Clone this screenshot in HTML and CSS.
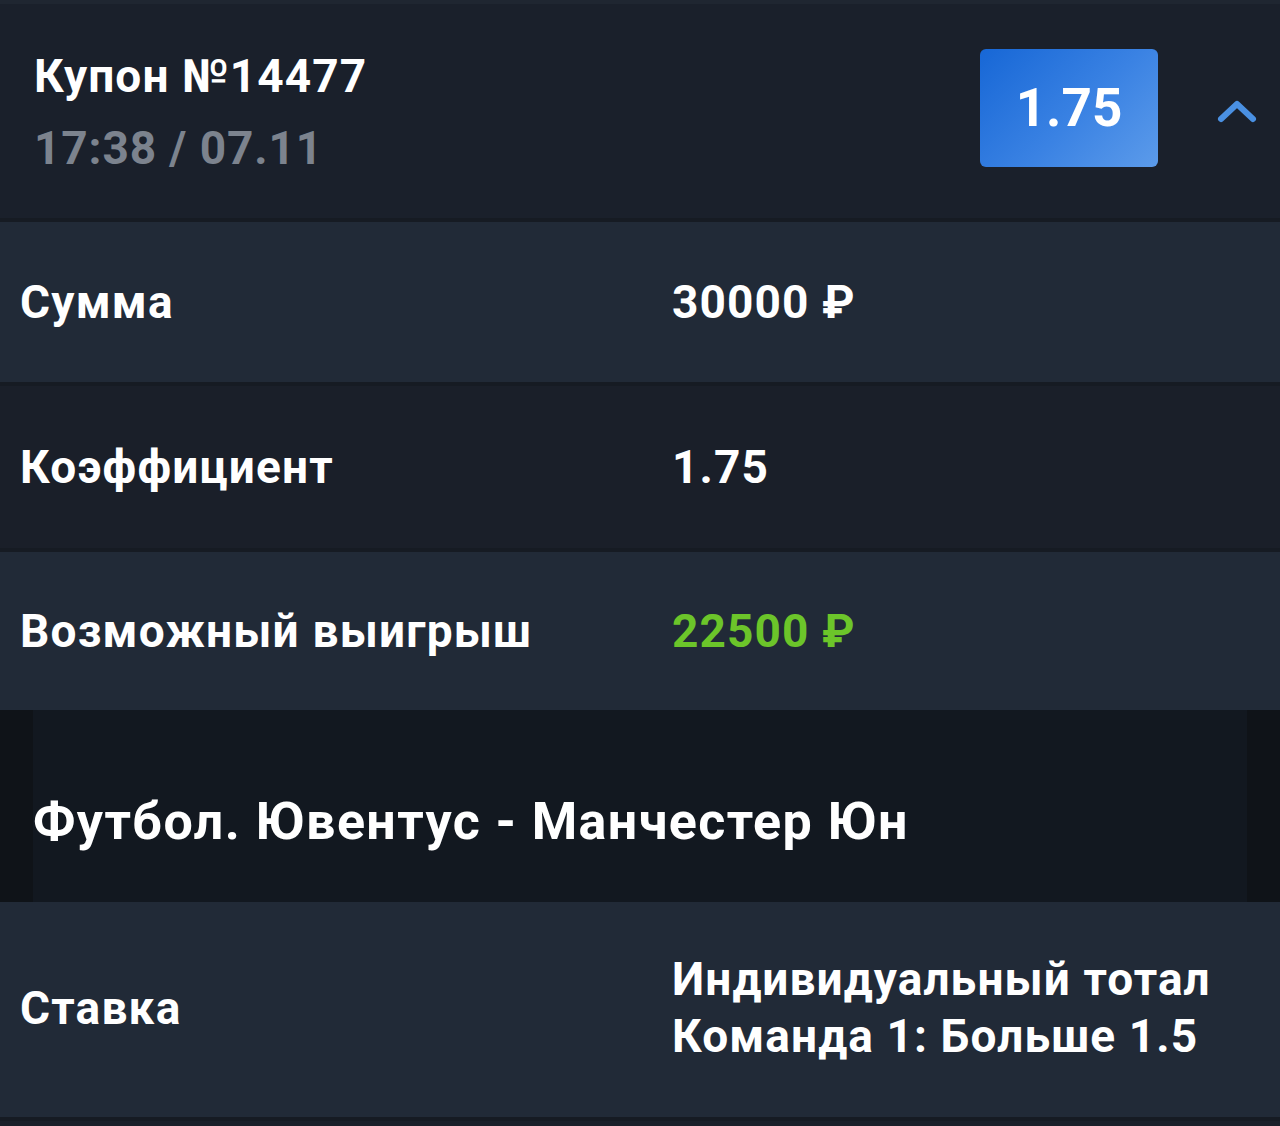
FILE: index.html
```html
<!DOCTYPE html>
<html lang="ru">
<head>
    <meta charset="UTF-8">
    <meta name="viewport" content="width=device-width, initial-scale=1.0">
    <title>Купон №14477</title>
    <link rel="stylesheet" href="styles.css">
</head>
<body>
    <div class="coupon">
        <div class="coupon-head">
            <div class="head-info">
                <div class="coupon-title">Купон №14477</div>
                <div class="coupon-date">17:38 / 07.11</div>
            </div>
            <div class="odds-badge">1.75</div>
            <div class="toggle">
                <svg width="40" height="26" viewBox="0 0 40 26">
                    <path d="M4 21 L20 6 L36 21" fill="none" stroke="#4a90e2" stroke-width="6" stroke-linecap="round" stroke-linejoin="round"/>
                </svg>
            </div>
        </div>

        <div class="row light">
            <div class="label">Сумма</div>
            <div class="value">30000 ₽</div>
        </div>
        <div class="row dark">
            <div class="label">Коэффициент</div>
            <div class="value">1.75</div>
        </div>
        <div class="row light last">
            <div class="label">Возможный выигрыш</div>
            <div class="value win">22500 ₽</div>
        </div>

        <div class="event">
            <div class="event-title">Футбол. Ювентус - Манчестер Юн</div>
        </div>

        <div class="row light bet">
            <div class="label">Ставка</div>
            <div class="value">Индивидуальный тотал<br>Команда 1: Больше 1.5</div>
        </div>
    </div>
</body>
</html>
```

FILE: styles.css
```css
body {
    margin: 0;
    background-color: #1a1f29;
    font-family: Roboto, "Noto Sans", sans-serif;
    font-weight: 700;
    letter-spacing: 1.1px;
    color: #ffffff;
}

.coupon {
    border-top: 4px solid #1f2631;
}

.coupon-head {
    display: flex;
    align-items: center;
    height: 214px;
    padding-left: 34px;
    background-color: #1a202b;
}

.head-info {
    flex: 1;
    padding-top: 2px;
}

.coupon-title {
    font-size: 46px;
    line-height: 72px;
}

.coupon-date {
    font-size: 46px;
    line-height: 72px;
    letter-spacing: 0.9px;
    color: #7c838e;
}

.odds-badge {
    width: 178px;
    height: 118px;
    margin-top: -6px;
    border-radius: 6px;
    background: linear-gradient(135deg, #1767d6 0%, #3a82e3 55%, #5c9bea 100%);
    display: flex;
    align-items: center;
    justify-content: center;
    font-size: 53px;
    letter-spacing: 0;
}

.toggle {
    width: 122px;
    display: flex;
    justify-content: flex-end;
    padding-right: 23px;
    box-sizing: border-box;
}

.row {
    display: flex;
    align-items: center;
    border-top: 4px solid #161b23;
    padding-left: 20px;
    height: 160px;
}

.light {
    background-color: #212a37;
}

.dark {
    background-color: #1a1f29;
    height: 162px;
}

.last {
    height: 158px;
}

.label {
    width: 652px;
    font-size: 46px;
    letter-spacing: 1.2px;
}

.value {
    font-size: 46px;
    line-height: 57px;
}

.win {
    color: #6cc52a;
}

.event {
    height: 192px;
    background-color: #121820;
    border-left: 33px solid #0f1318;
    border-right: 33px solid #0f1318;
    display: flex;
    align-items: center;
}

.event-title {
    font-size: 52px;
    letter-spacing: 1.4px;
    margin-top: 30px;
}

.bet {
    height: 211px;
    padding-bottom: 4px;
    border-top: none;
    border-bottom: 4px solid #161b23;
}
```
